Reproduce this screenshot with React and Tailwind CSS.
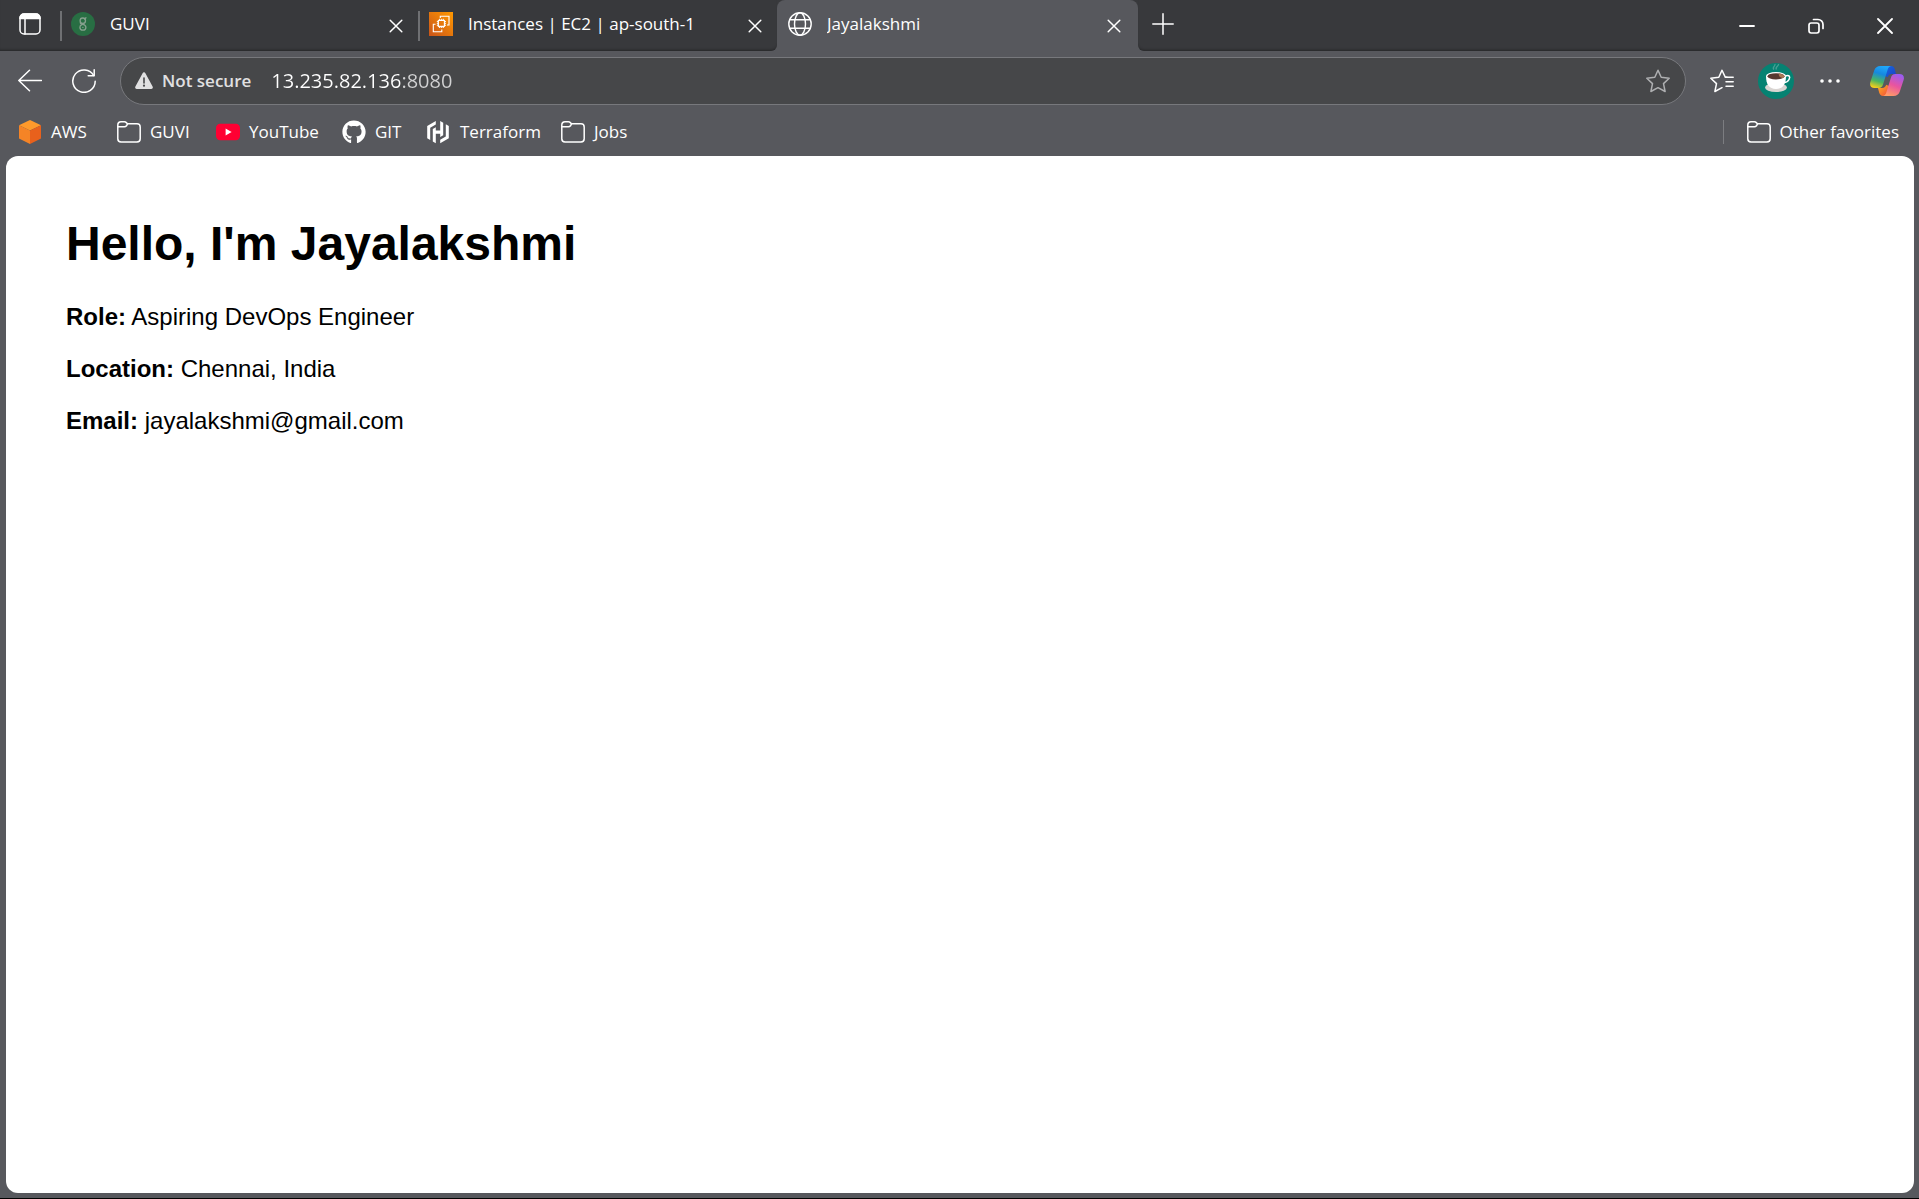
import React from "react";
import { FaGithub } from "react-icons/fa";

const line = { fill: "none", stroke: "currentColor", strokeLinecap: "round", strokeLinejoin: "round" };

function TabActionsIcon() {
  return (
    <svg className="size-6" viewBox="0 0 24 24" {...line} strokeWidth="1.5">
      <rect x="2" y="2" width="20" height="20" rx="4" />
      <path d="M2 6.5V6a4 4 0 0 1 4-4h12a4 4 0 0 1 4 4v.5z" fill="currentColor" />
      <path d="M7 7v15" />
    </svg>
  );
}

function GuviIcon() {
  return (
    <svg className="size-6" viewBox="0 0 24 24">
      <circle cx="12" cy="12" r="12" fill="#286e43" />
      <g fill="none" stroke="#86a08e" strokeWidth="1.3" strokeLinecap="round">
        <path d="M15 5.800 13.600 7" />
        <circle cx="11.800" cy="8.700" r="2.700" />
        <path d="M9.300 11c0 1.600 5.600.6 5.600 4.200a3 3 0 1 1-6 0c0-1.300.9-2.200 2.200-2.500" />
        <path d="M11.900 15.300v.1" />
      </g>
    </svg>
  );
}

function Ec2Icon() {
  return (
    <svg className="size-6" viewBox="0 0 24 24">
      <defs>
        <linearGradient id="ec2" x1="0" y1="1" x2="1" y2="0">
          <stop offset="0" stopColor="#c9541a" />
          <stop offset="1" stopColor="#ff9900" />
        </linearGradient>
      </defs>
      <path fill="url(#ec2)" d="M0 0h24v24H0z" />
      <g fill="none" stroke="#fff" strokeWidth="1.1">
        <rect x="9.300" y="8.300" width="6.200" height="6.200" rx=".5" strokeWidth="1.300" />
        <path strokeWidth=".9" d="M10.500 8V6.800M12.400 8V6.800M14.300 8V6.800M10.500 16v-1.200M12.400 16v-1.200M14.300 16v-1.200M9 9.500H7.800M9 11.400H7.800M9 13.300H7.800M17 9.500h-1.200M17 11.400h-1.200M17 13.300h-1.200" />
        <path d="M11.300 6V4.300H20v8.700h-2" />
        <path d="M6.500 12.300H4.300v7.500h8.500v-2.300" />
      </g>
    </svg>
  );
}

function GlobeIcon() {
  return (
    <svg className="size-6" viewBox="0 0 24 24" {...line} strokeWidth="1.400">
      <circle cx="12" cy="12" r="11.200" />
      <ellipse cx="12" cy="12" rx="5.500" ry="11.200" />
      <path d="M1.700 7.800h20.600M1.700 16.200h20.600" />
    </svg>
  );
}

function CloseIcon() {
  return (
    <svg className="size-3.5" viewBox="0 0 14 14" {...line} strokeWidth="1.500">
      <path d="m1.200 1.200 11.600 11.600M12.800 1.200 1.200 12.800" />
    </svg>
  );
}

function BackIcon() {
  return (
    <svg className="size-6" viewBox="0 0 24 24" {...line} strokeWidth="1.500">
      <path d="M23.500 11.500H.8M11.500 1.300.8 11.500l10.700 10.200" />
    </svg>
  );
}

function RefreshIcon() {
  return (
    <svg className="size-6" viewBox="0 0 24 24" {...line} strokeWidth="1.500">
      <path d="M23.200 12.200A11.200 11.200 0 1 1 21.700 6.500" />
      <path d="M22.200.8v6h-6" />
    </svg>
  );
}

function WarningIcon() {
  return (
    <svg className="h-[18px] w-[18px]" viewBox="0 0 18 18">
      <path d="M7.600 1.200a1.600 1.600 0 0 1 2.800 0l7.200 13.400a1.600 1.600 0 0 1-1.400 2.400H1.800a1.600 1.600 0 0 1-1.400-2.400z" fill="#e0e0e1" />
      <path d="M9 6v5" stroke="#464749" strokeWidth="1.600" strokeLinecap="round" />
      <circle cx="9" cy="13.700" r="1.100" fill="#464749" />
    </svg>
  );
}

function StarIcon() {
  return (
    <svg className="size-6 text-[#aeafb1]" viewBox="0 0 24 24" {...line} strokeWidth="1.500">
      <path d="m12 1.200 3.200 7.100 8 .9-5.700 5.400 1.600 7.900-7.100-3.800-7.100 3.800 1.600-7.900L.8 9.200l8-.9z" />
    </svg>
  );
}

function FavoritesIcon() {
  return (
    <svg className="size-6" viewBox="0 0 24 24" {...line} strokeWidth="1.500">
      <path d="M17 8.300h-1.700L12 1.200 8.800 8.300l-8 .9 5.700 5.400-1.600 7.900 7.100-3.800" />
      <path d="M15.500 8.300h7.700M16 12.800h7.200M16 17.300h7.200" />
    </svg>
  );
}

function CoffeeAvatar() {
  return (
    <svg className="size-9" viewBox="0 0 36 36">
      <circle cx="18" cy="18" r="18" fill="#058272" />
      <path d="M16 6.500c-2.500-2 1.500-3 1-5.500M18.500 6.500c-2-2.500 2.500-3 2-5.500" stroke="#4a9e93" strokeWidth="1.300" fill="none" />
      <ellipse cx="18" cy="24.500" rx="11" ry="4.500" fill="#d9d5d2" />
      <path d="M27.500 13c4-1.500 5 1 3.500 3.500-1 2-3 3-5 3" stroke="#fff" strokeWidth="1.500" fill="none" />
      <path d="M8 13c0 8 3 13 10 13s10-5 10-13z" fill="#fff" />
      <ellipse cx="18" cy="13" rx="10" ry="4" fill="#fff" />
      <ellipse cx="18" cy="13.300" rx="8.500" ry="3.100" fill="#57392f" />
      <path d="M21 10.700c3 .3 5.500 1.300 5.500 2.600 0 .7-.6 1.200-1.600 1.700-2.900-.5-4.900-2.300-3.900-4.300z" fill="#a87754" />
    </svg>
  );
}

function CopilotIcon() {
  return (
    <svg className="h-[30px] w-[34px]" viewBox="0 0 34 30">
      <defs>
        <linearGradient id="cpA" x1=".6" y1="0" x2=".3" y2="1">
          <stop offset="0" stopColor="#20a7fa" />
          <stop offset=".35" stopColor="#1689df" />
          <stop offset=".7" stopColor="#4bb660" />
          <stop offset="1" stopColor="#f5cf1b" />
        </linearGradient>
        <linearGradient id="cpB" x1="0" y1="0" x2="1" y2="1">
          <stop offset="0" stopColor="#1769e0" />
          <stop offset="1" stopColor="#1b3fc4" />
        </linearGradient>
        <linearGradient id="cpC" x1=".7" y1="0" x2=".3" y2="1">
          <stop offset="0" stopColor="#9b5cf0" />
          <stop offset=".5" stopColor="#e9549f" />
          <stop offset="1" stopColor="#ff9d66" />
        </linearGradient>
        <linearGradient id="cpD" x1="0" y1="0" x2="1" y2="1">
          <stop offset="0" stopColor="#ffb21d" />
          <stop offset="1" stopColor="#f04a3e" />
        </linearGradient>
      </defs>
      <path fill="url(#cpB)" d="M16 0h5c2 0 3.200 1.200 3.800 3.200L26 8h-4c-2.500 0-3.600 1.200-4.200 3.200L15 10z" />
      <path fill="url(#cpD)" d="M18 30h-5c-2 0-3.200-1.200-3.800-3.200L8 22h4c2.500 0 3.600-1.200 4.200-3.200L19 20z" />
      <path fill="url(#cpA)" d="M10.500 0H21c-1.800.3-2.700 1.500-3.400 3.700L13.100 18.200c-.8 2.600-1.900 3.800-4.500 3.800H4.500C1 22-.7 19.500.4 16L4.200 4.500C5.200 1.600 7.300 0 10.500 0z" />
      <path fill="url(#cpC)" d="M23.500 30H13c1.800-.3 2.700-1.500 3.400-3.700L20.900 11.800C21.700 9.200 22.800 8 25.400 8h4.100c3.500 0 5.200 2.500 4.100 6l-3.800 11.500c-1 2.900-3.100 4.500-6.300 4.500z" />
    </svg>
  );
}

function AwsIcon() {
  return (
    <svg className="size-6" viewBox="0 0 24 24">
      <path fill="#ff9a2b" d="M12 0 23 5.200 12 10.500 1 5.200z" />
      <path fill="#f58426" d="M1 5.200 12 10.500V24L1 18.600z" />
      <path fill="#e8611c" d="M23 5.200 12 10.500V24l11-5.400z" />
    </svg>
  );
}

function FolderIcon() {
  return (
    <svg className="size-6" viewBox="0 0 24 24" {...line} strokeWidth="1.500">
      <path d="M.8 5A3.200 3.200 0 0 1 4 1.800h3.400c.8 0 1.400.3 1.900.8l1.200 1.200h9.500a3.200 3.200 0 0 1 3.200 3.200v11.800a3.200 3.200 0 0 1-3.200 3.200H4a3.200 3.200 0 0 1-3.200-3.200z" />
      <path d="M.8 6.800h6.700c.9 0 1.500-.4 2-1l1-1.900" />
    </svg>
  );
}

function YouTubeIcon() {
  return (
    <svg className="size-6" viewBox="0 0 24 24">
      <rect y="3.700" width="24" height="16.600" rx="4.200" fill="#ff0033" />
      <path fill="#fff" d="M9.600 8.600v6.800l6-3.400z" />
    </svg>
  );
}

function TerraformIcon() {
  return (
    <svg className="size-6" viewBox="0 0 24 24" fill="currentColor">
      <path d="M8.800 1 .2 6v12.300l3 1.700V7.700l5.600-3.200zM13.200 1v9.600H8.800V7.200l-3 1.700v12.700l3 1.700v-9.600h4.400v3.300l3-1.700V2.700z" />
      <path d="M13.200 23.300l8.600-5V6l-3-1.700v12.300l-5.600 3.200z" />
    </svg>
  );
}

function Tab({ icon, title }) {
  return (
    <div className="flex h-full w-full items-center pr-[15px] pl-[9px]">
      <button className="flex min-w-0 flex-1 items-center gap-[15px] pb-[3px] text-left">
        {icon}
        <span className="truncate">{title}</span>
      </button>
      <button aria-label={`Close ${title}`}><CloseIcon /></button>
    </div>
  );
}

function Bookmark({ icon, label, className }) {
  return (
    <a href="#" className={`flex items-center gap-[9px] whitespace-nowrap ${className}`}>
      {icon}
      <span>{label}</span>
    </a>
  );
}

const bookmarks = [
  { label: "AWS", icon: <AwsIcon />, className: "w-[99px]" },
  { label: "GUVI", icon: <FolderIcon />, className: "w-[99px]" },
  { label: "YouTube", icon: <YouTubeIcon />, className: "w-[126px]" },
  { label: "GIT", icon: <FaGithub className="size-6" />, className: "w-[85px]" },
  { label: "Terraform", icon: <TerraformIcon />, className: "w-[134px]" },
  { label: "Jobs", icon: <FolderIcon />, className: "" },
];

const dark = "bg-[#38393c] shadow-[inset_0_-3px_3px_-2px_rgba(0,0,0,0.35)]";

export default function App() {
  return (
    <div className="flex min-h-screen flex-col border-b border-black bg-[#57585d] font-['Open_Sans',sans-serif] text-[17px] leading-6 text-white">
      <header className="flex h-[51px]">
        <div className={`flex items-center rounded-br-md ${dark}`}>
          <button aria-label="Tab actions" className="flex w-[60px] justify-center pb-1"><TabActionsIcon /></button>
          <div className="h-[30px] w-0.5 bg-[#6f7073]" />
          <div className="h-full w-[356px]"><Tab icon={<GuviIcon />} title="GUVI" /></div>
          <div className="h-[30px] w-0.5 bg-[#6f7073]" />
          <div className="h-full w-[357px]"><Tab icon={<Ec2Icon />} title="Instances | EC2 | ap-south-1" /></div>
        </div>
        <div className="w-[361px] bg-[#38393c]">
          <div className="h-full rounded-t-lg bg-[#57585d] pr-0.5 pl-0.5"><Tab icon={<GlobeIcon />} title="Jayalakshmi" /></div>
        </div>
        <div className={`flex flex-1 items-center justify-between rounded-bl-md ${dark}`}>
          <button aria-label="New tab" className="ml-[14px] pb-1">
            <svg className="size-[22px]" viewBox="0 0 22 22" {...line} strokeWidth="1.500"><path d="M11 .8v20.400M.8 11h20.400" /></svg>
          </button>
          <div className="flex h-full">
            <button aria-label="Minimize" className="flex w-[69px] items-center justify-center">
              <svg className="size-4" viewBox="0 0 16 16" {...line} strokeWidth="1.800"><path d="M1 8h14" /></svg>
            </button>
            <button aria-label="Restore" className="flex w-[69px] items-center justify-center">
              <svg className="size-4" viewBox="0 0 16 16" {...line} strokeWidth="1.700">
                <rect x="1" y="5" width="10" height="10" rx="2.200" />
                <path d="M5.500 1.500H10A5 5 0 0 1 15 6.500V10.500" />
              </svg>
            </button>
            <button aria-label="Close window" className="flex w-[69px] items-center justify-center">
              <svg className="size-4" viewBox="0 0 16 16" {...line} strokeWidth="1.800"><path d="m1 1 14 14M15 1 1 15" /></svg>
            </button>
          </div>
        </div>
      </header>

      <nav className="flex h-[60px] items-center pr-[15px] pl-[18px]">
        <button aria-label="Back"><BackIcon /></button>
        <button aria-label="Refresh" className="ml-[30px]"><RefreshIcon /></button>
        <div className="mx-6 flex h-12 flex-1 items-center rounded-full border border-[#77787c] bg-[#464749] pr-[15px] pl-[14px]">
          <button className="flex items-center gap-[9px] font-semibold text-[#e0e0e1]">
            <WarningIcon />
            Not secure
          </button>
          <input
            aria-label="Address"
            defaultValue="13.235.82.136:8080"
            className="ml-5 min-w-0 flex-1 bg-linear-to-r from-white from-[129px] to-[#d2d2d3] to-[130px] bg-clip-text text-[20px] text-transparent outline-none"
          />
          <button aria-label="Add to favorites"><StarIcon /></button>
        </div>
        <button aria-label="Favorites"><FavoritesIcon /></button>
        <button aria-label="Profile" className="ml-6"><CoffeeAvatar /></button>
        <button aria-label="Settings and more" className="ml-[26px]">
          <svg className="h-6 w-5" viewBox="0 0 20 24" fill="currentColor">
            <circle cx="2" cy="12" r="1.800" /><circle cx="10" cy="12" r="1.800" /><circle cx="18" cy="12" r="1.800" />
          </svg>
        </button>
        <button aria-label="Copilot" className="ml-[30px]"><CopilotIcon /></button>
      </nav>

      <nav className="flex h-[45px] items-center pr-5 pb-[3px] pl-[18px]">
        {bookmarks.map((b) => <Bookmark key={b.label + b.className} {...b} />)}
        <div className="mr-[23px] ml-auto h-6 w-px bg-[#7c7d81]" />
        <Bookmark icon={<FolderIcon />} label="Other favorites" className="" />
      </nav>

      <main className="mr-[5px] mb-[5px] ml-[6px] flex-1 rounded-xl bg-white p-[60px] font-['Liberation_Sans',Arial,sans-serif] text-2xl/7 text-black">
        <h1 className="mb-8 text-5xl/[55px] font-bold">Hello, I'm Jayalakshmi</h1>
        <div className="flex flex-col gap-6">
          <p><strong>Role:</strong> Aspiring DevOps Engineer</p>
          <p><strong>Location:</strong> Chennai, India</p>
          <p><strong>Email:</strong> jayalakshmi@gmail.com</p>
        </div>
      </main>
    </div>
  );
}
